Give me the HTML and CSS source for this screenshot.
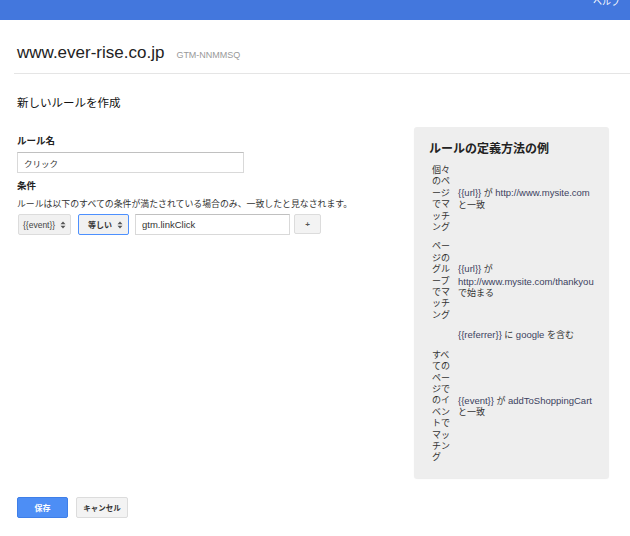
FILE: index.html
```html
<!DOCTYPE html>
<html lang="ja">
<head>
<meta charset="utf-8">
<title>新しいルールを作成</title>
<link rel="stylesheet" href="styles.css">
</head>
<body>
<header class="topbar"><span class="help">ヘルプ</span></header>
<div class="site-head">
  <span class="site-name">www.ever-rise.co.jp</span>
  <span class="gtm-id">GTM-NNMMSQ</span>
</div>
<main class="content">
  <div class="layout">
    <section class="form">
      <h1 class="page-title">新しいルールを作成</h1>
      <div class="field-label">ルール名</div>
      <div class="text-input name-input">クリック</div>
      <div class="field-label cond-label">条件</div>
      <p class="hint">ルールは以下のすべての条件が満たされている場合のみ、一致したと見なされます。</p>
      <div class="cond-row">
        <div class="select sel-var"><span>{{event}}</span>
          <svg class="updown" width="6" height="8" viewBox="0 0 6 8"><path d="M3 0.5 L5.5 3.2 H0.5 Z M3 7.5 L5.5 4.8 H0.5 Z" fill="#555"/></svg>
        </div>
        <div class="select sel-op"><span>等しい</span>
          <svg class="updown" width="6" height="8" viewBox="0 0 6 8"><path d="M3 0.5 L5.5 3.2 H0.5 Z M3 7.5 L5.5 4.8 H0.5 Z" fill="#555"/></svg>
        </div>
        <div class="text-input val-input">gtm.linkClick</div>
        <div class="btn btn-plus">+</div>
      </div>
    </section>
    <aside class="panel">
      <h2 class="panel-title">ルールの定義方法の例</h2>
      <div class="examples">
        <div class="ex-name">個々のページでマッチング</div>
        <div class="ex-desc"><span class="code">{{url}}</span> が <span class="code">http://www.mysite.com</span> と一致</div>
        <div class="ex-name">ページのグループでマッチング</div>
        <div class="ex-desc"><span class="code">{{url}}</span> が <span class="code">http://www.mysite.com/thankyou</span> で始まる</div>
        <div class="ex-name"></div>
        <div class="ex-desc"><span class="code">{{referrer}}</span> に <span class="code">google</span> を含む</div>
        <div class="ex-name">すべてのページでのイベントでマッチング</div>
        <div class="ex-desc"><span class="code">{{event}}</span> が <span class="code">addToShoppingCart</span> と一致</div>
      </div>
    </aside>
  </div>
  <div class="actions">
    <div class="btn btn-save">保存</div>
    <div class="btn btn-cancel">キャンセル</div>
  </div>
</main>
</body>
</html>
```
FILE: styles.css
```css
* { box-sizing: border-box; }
html, body { margin: 0; padding: 0; background: #fff; }
body {
  font-family: "Liberation Sans", "Noto Sans CJK JP", Arial, sans-serif;
  color: #222;
  width: 630px;
  overflow: hidden;
}
.topbar {
  height: 20px;
  background: #4377dd;
  display: flex;
  justify-content: flex-end;
  align-items: flex-start;
  padding-right: 10px;
  overflow: hidden;
}
.help {
  color: #fff;
  font-size: 9px;
  line-height: 10px;
  margin-top: -3px;
}
.site-head {
  margin-left: 14px;
  padding: 23px 0 10px 3px;
  border-bottom: 1px solid #e5e5e5;
  display: flex;
  align-items: baseline;
  gap: 12px;
}
.site-name {
  font-size: 17px;
  line-height: 20px;
  color: #222;
}
.gtm-id {
  font-size: 9px;
  color: #999;
}
.content {
  padding: 0 0 0 17px;
}
.layout {
  display: flex;
  align-items: flex-start;
}
.form {
  width: 397px;
  flex: none;
  display: flex;
  flex-direction: column;
  align-items: flex-start;
}
.page-title {
  margin: 22px 0 0;
  font-size: 11.5px;
  line-height: 14px;
  font-weight: normal;
  color: #111;
}
.field-label {
  margin-top: 25px;
  font-size: 9.5px;
  line-height: 12px;
  font-weight: bold;
  color: #222;
}
.cond-label { margin-top: 7px; }
.text-input {
  border: 1px solid #d9d9d9;
  border-top-color: #c0c0c0;
  background: #fff;
  color: #333;
  display: flex;
  align-items: center;
}
.name-input {
  margin-top: 5px;
  width: 227px;
  height: 21px;
  padding-left: 6px;
  font-size: 8.5px;
}
.hint {
  margin: 6px 0 0;
  font-size: 8.9px;
  line-height: 12px;
  color: #333;
}
.cond-row {
  margin-top: 4px;
  display: flex;
  align-items: stretch;
  height: 21px;
}
.select {
  display: flex;
  align-items: center;
  justify-content: space-between;
  background: #f1f1f1;
  border: 1px solid #dcdcdc;
  border-radius: 2px;
  color: #444;
  font-size: 8.5px;
}
.sel-var {
  margin-left: 1px;
  width: 53px;
  padding: 0 4px 0 4px;
}
.sel-op {
  margin-left: 7px;
  width: 51px;
  padding: 0 5px 0 9px;
  border-color: #4d90fe;
  font-weight: bold;
  font-size: 8px;
  color: #333;
}
.val-input {
  margin-left: 6px;
  width: 155px;
  padding-left: 6px;
  font-size: 9.5px;
  color: #333;
}
.btn {
  display: flex;
  align-items: center;
  justify-content: center;
  border-radius: 2px;
  font-weight: bold;
  font-size: 8px;
}
.btn-plus {
  margin-left: 4px;
  width: 27px;
  height: 20px;
  background: #f3f3f3;
  border: 1px solid #dcdcdc;
  color: #555;
  font-size: 8px;
}
.panel {
  margin-left: 0;
  margin-top: 53px;
  width: 195px;
  height: 351px;
  background: #eeeeee;
  border-radius: 3px;
  box-shadow: 0 1px 1px rgba(0,0,0,0.08);
  padding: 15px 8px 0 15px;
}
.panel-title {
  margin: 0;
  font-size: 12px;
  line-height: 15px;
  font-weight: bold;
  color: #222;
}
.examples {
  margin: 8px 0 0 3px;
  display: grid;
  grid-template-columns: 19px 142px;
  column-gap: 7px;
  row-gap: 8px;
  align-items: center;
  font-size: 9px;
  line-height: 11.4px;
  color: #333;
}
.ex-name {
  word-break: break-all;
  line-break: anywhere;
  font-size: 9px;
}
.ex-desc {
  font-size: 9px;
}
.code {
  font-size: 9.5px;
  color: #3c4260;
}
.actions {
  margin-top: 19px;
  display: flex;
  gap: 8px;
}
.btn-save {
  width: 51px;
  height: 21px;
  background: #4d8ef5;
  border: 1px solid #3f7fe8;
  color: #fff;
}
.btn-cancel {
  width: 52px;
  height: 21px;
  background: #f3f3f3;
  border: 1px solid #dcdcdc;
  color: #333;
  font-size: 7.5px;
}
```
